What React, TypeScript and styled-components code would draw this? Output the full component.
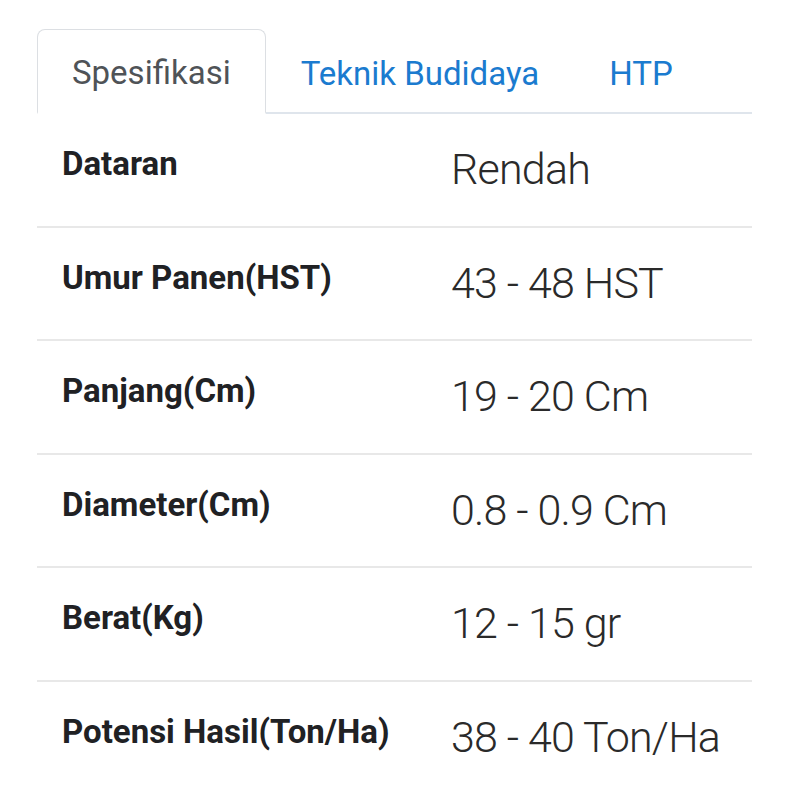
import React, { useState } from "react";
import styled, { createGlobalStyle } from "styled-components";

const GlobalStyle = createGlobalStyle`
  body {
    margin: 0;
    background: #ffffff;
    font-family: Roboto, "Noto Sans", "Liberation Sans", sans-serif;
  }
`;

const specs = [
  { label: "Dataran", value: "Rendah" },
  { label: "Umur Panen(HST)", value: "43 - 48 HST" },
  { label: "Panjang(Cm)", value: "19 - 20 Cm" },
  { label: "Diameter(Cm)", value: "0.8 - 0.9 Cm" },
  { label: "Berat(Kg)", value: "12 - 15 gr" },
  { label: "Potensi Hasil(Ton/Ha)", value: "38 - 40 Ton/Ha" },
];

const tabs = ["Spesifikasi", "Teknik Budidaya", "HTP"];

const App = () => {
  const [active, setActive] = useState(0);

  return (
    <Page>
      <GlobalStyle />
      <TabBar>
        {tabs.map((t, i) => (
          <Tab key={t} active={i === active} onClick={() => setActive(i)}>
            {t}
          </Tab>
        ))}
      </TabBar>
      <SpecTable>
        {specs.map((s) => (
          <SpecRow key={s.label}>
            <Label>{s.label}</Label>
            <Value>{s.value}</Value>
          </SpecRow>
        ))}
      </SpecTable>
    </Page>
  );
};

const Page = styled.div`
  width: 715px;
  margin: 29px 0 0 37px;
`;

const TabBar = styled.div`
  display: flex;
  border-bottom: 2px solid #dfe5ec;
  height: 85px;
  box-sizing: border-box;
`;

const Tab = styled.div<{ active: boolean }>`
  display: flex;
  align-items: center;
  padding: 2px 34px 0 34px;
  font-size: 33px;
  font-weight: 400;
  cursor: pointer;
  box-sizing: border-box;
  height: 85px;
  margin-bottom: -2px;
  color: ${(p) => (p.active ? "#4f5357" : "#1b7bcf")};
  background: ${(p) => (p.active ? "#ffffff" : "transparent")};
  border: 1px solid ${(p) => (p.active ? "#dcdfe3" : "transparent")};
  border-bottom: ${(p) => (p.active ? "2px solid #ffffff" : "none")};
  border-radius: 8px 8px 0 0;
`;

const SpecTable = styled.div`
  display: flex;
  flex-direction: column;
`;

const SpecRow = styled.div`
  display: grid;
  grid-template-columns: 389px 1fr;
  height: 113.5px;
  box-sizing: border-box;
  padding: 30px 0 0 25px;
  border-bottom: 2px solid #e8e8e8;

  &:last-child {
    border-bottom: none;
  }
`;

const Label = styled.div`
  font-size: 33px;
  font-weight: 700;
  line-height: 1.2;
  color: #202124;
`;

const Value = styled.div`
  font-size: 43px;
  font-weight: 300;
  line-height: 1.2;
  color: #2a2a2a;
  letter-spacing: -0.8px;
`;

export default App;
